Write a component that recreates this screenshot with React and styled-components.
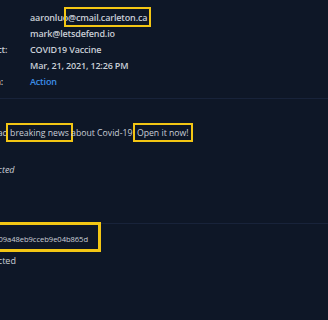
import React from "react";
import styled, { createGlobalStyle } from "styled-components";

const Global = createGlobalStyle`
  html, body {
    margin: 0;
    padding: 0;
    background: #0e1727;
  }
  body {
    font-family: "Open Sans", "Liberation Sans", sans-serif;
    color: #c9ced6;
    overflow: hidden;
  }
`;

const Page = styled.div`
  width: 328px;
  height: 320px;
  overflow: hidden;
  background: #0e1727;
`;

const Details = styled.div`
  padding-top: 9px;
  padding-bottom: 9px;
  margin-left: -26px;
`;

const Row = styled.div`
  display: flex;
  height: 16px;
  align-items: center;
  font-size: 9px;
  font-weight: 600;
  letter-spacing: -0.15px;
  white-space: nowrap;
`;

const Label = styled.div`
  width: 56px;
  flex-shrink: 0;
`;

const Value = styled.div`
  color: ${(p) => (p.$link ? "#3d8fe8" : "#c9ced6")};
`;

const Divider = styled.div`
  height: 1px;
  background: #18233a;
`;

const Mark = styled.span`
  border: 2px solid #f3c614;
  padding: 2px 2px 1px;
  margin: 0 -4px;
`;

const Section = styled.div`
  padding-top: 25px;
  padding-bottom: 2px;
  display: flex;
  flex-direction: column;
`;

const Line = styled.div`
  white-space: nowrap;
  font-size: ${(p) => p.$size || 9}px;
  line-height: 18px;
  margin-left: ${(p) => p.$shift}px;
  margin-top: ${(p) => p.$gap || 0}px;
  font-style: ${(p) => (p.$italic ? "italic" : "normal")};
`;

const HashBox = styled.div`
  margin-left: -20px;
  margin-top: -2px;
  width: 121px;
  height: 30px;
  box-sizing: border-box;
  border: 3px solid #f3c614;
  display: flex;
  align-items: center;
  justify-content: flex-end;
  padding: 3px 10px 0 0;
  font-size: 7.6px;
  letter-spacing: -0.05px;
  white-space: nowrap;
  overflow: hidden;
`;

export default function App() {
  return (
    <Page>
      <Global />
      <Details>
        <Row>
          <Label>From:</Label>
          <Value>
            aaronluo<Mark>@cmail.carleton.ca</Mark>
          </Value>
        </Row>
        <Row>
          <Label>To:</Label>
          <Value>mark@letsdefend.io</Value>
        </Row>
        <Row>
          <Label>Subject:</Label>
          <Value>COVID19 Vaccine</Value>
        </Row>
        <Row>
          <Label>Date:</Label>
          <Value>Mar, 21, 2021, 12:26 PM</Value>
        </Row>
        <Row>
          <Label>Action:</Label>
          <Value $link>Action</Value>
        </Row>
      </Details>
      <Divider />
      <Section>
        <Line $shift={-45} $size={8.7}>
          You can read <Mark>breaking news</Mark> about Covid-19. <Mark>Open it now!</Mark>
        </Line>
        <Line $shift={-36} $gap={19} $italic>
          Not detected
        </Line>
        <Line $shift={-54} $gap={24}>
          Attachments
        </Line>
      </Section>
      <Divider />
      <HashBox>c109a48eb9cceb9e04b865d</HashBox>
      <Line $shift={-22}>Detected</Line>
    </Page>
  );
}
